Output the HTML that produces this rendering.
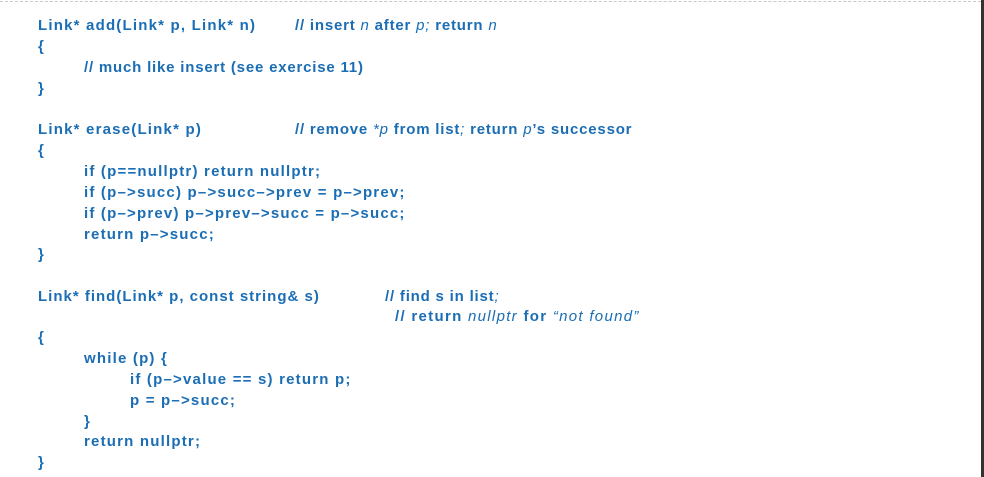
<!DOCTYPE html>
<html><head><meta charset="utf-8"><style>
html,body{margin:0;padding:0;background:#fff;width:984px;height:477px;overflow:hidden;position:relative}
.top{position:absolute;left:0;top:1px;width:981px;border-top:1px dashed #c8c8c8}
.bar{position:absolute;right:0;top:0;width:3px;height:477px;background:#333}
.l{position:absolute;font-family:"Liberation Sans",sans-serif;font-weight:bold;font-size:15px;color:#1b6db4;white-space:pre;line-height:20px;letter-spacing:1.2px;margin-top:1px}
.m{letter-spacing:0.8px}
i{font-weight:normal;font-style:italic}
</style></head><body>
<div class="top"></div><div class="bar"></div>
<div class="l" style="left:38px;top:15px">Link* add(Link* p, Link* n)</div>
<div class="l m" style="left:295px;top:15px">// insert <i>n</i> after <i>p; </i>return <i>n</i></div>
<div class="l" style="left:38px;top:36px">{</div>
<div class="l m" style="left:84px;top:57px">// much like insert (see exercise 11)</div>
<div class="l" style="left:38px;top:78px">}</div>

<div class="l" style="left:38px;top:119px">Link* erase(Link* p)</div>
<div class="l m" style="left:295px;top:119px">// remove <i>*p</i> from list<i>; </i>return <i>p</i>’s successor</div>
<div class="l" style="left:38px;top:140px">{</div>
<div class="l" style="left:84px;top:161px">if (p==nullptr) return nullptr;</div>
<div class="l" style="left:84px;top:182px">if (p–&gt;succ) p–&gt;succ–&gt;prev = p–&gt;prev;</div>
<div class="l" style="left:84px;top:203px">if (p–&gt;prev) p–&gt;prev–&gt;succ = p–&gt;succ;</div>
<div class="l" style="left:84px;top:224px">return p–&gt;succ;</div>
<div class="l" style="left:38px;top:244px">}</div>

<div class="l" style="left:38px;top:286px;letter-spacing:1px">Link* find(Link* p, const string&amp; s)</div>
<div class="l m" style="left:385px;top:286px">// find s in list<i>;</i></div>
<div class="l m" style="left:395px;top:306px;letter-spacing:1.3px">// return <i>nullptr</i> for <i>“not found”</i></div>
<div class="l" style="left:38px;top:327px">{</div>
<div class="l" style="left:84px;top:348px">while (p) {</div>
<div class="l" style="left:130px;top:369px">if (p–&gt;value == s) return p;</div>
<div class="l" style="left:130px;top:390px">p = p–&gt;succ;</div>
<div class="l" style="left:84px;top:411px">}</div>
<div class="l" style="left:84px;top:431px">return nullptr;</div>
<div class="l" style="left:38px;top:452px">}</div>
</body></html>
